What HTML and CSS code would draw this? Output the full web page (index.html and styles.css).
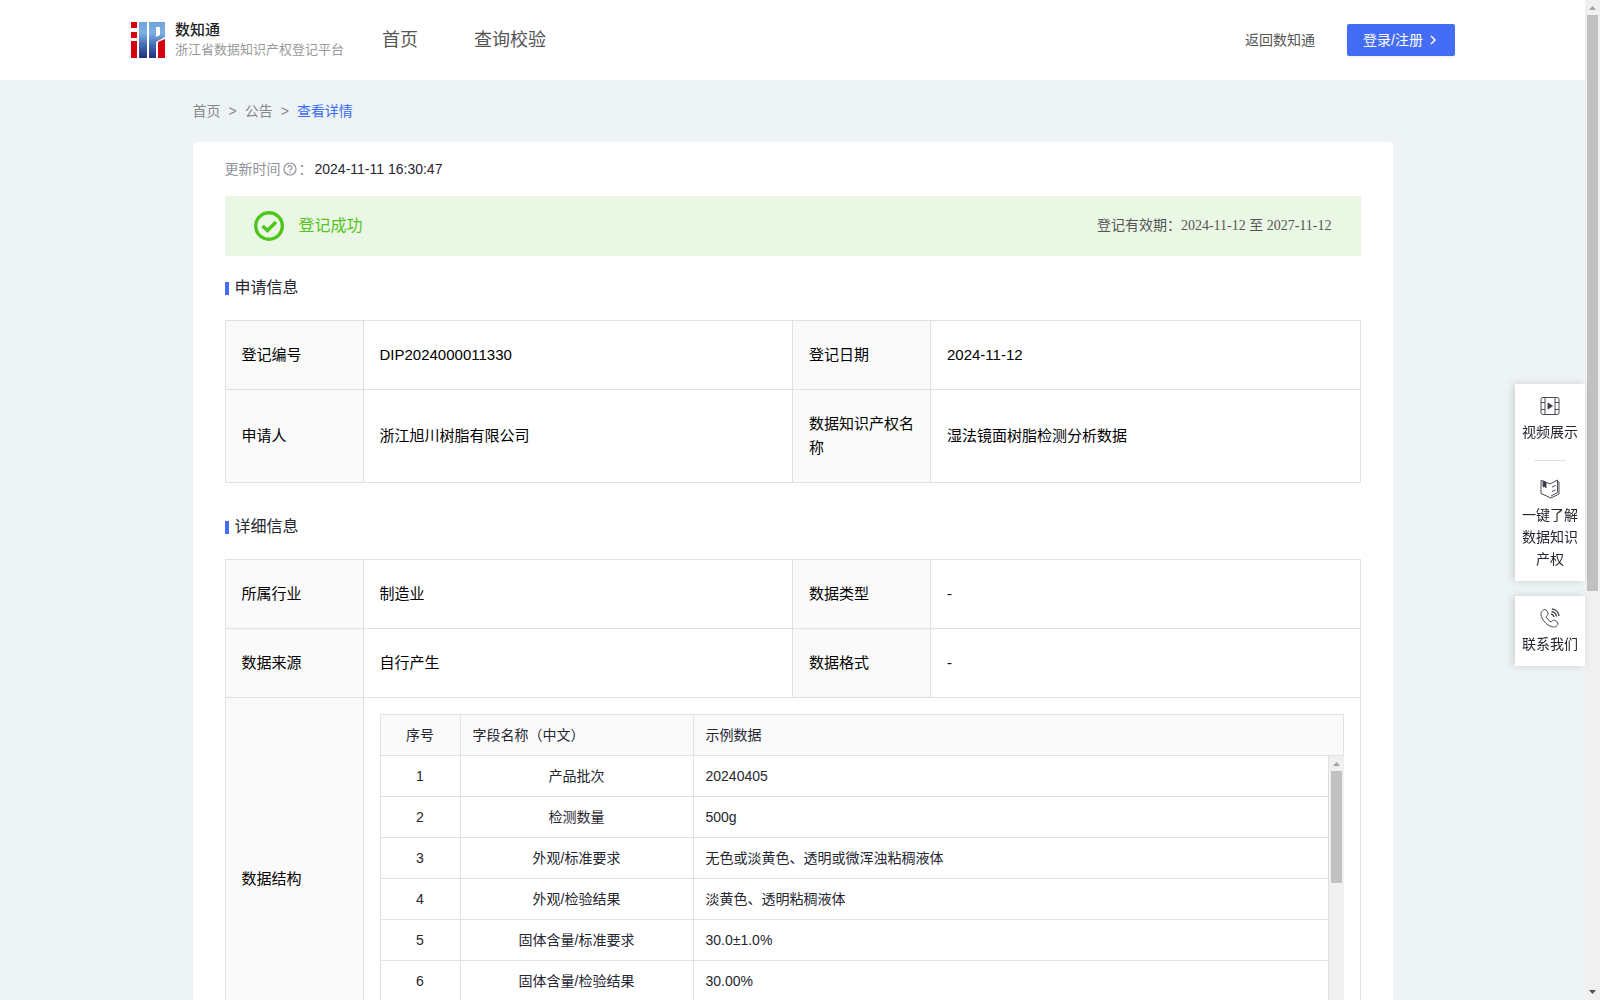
FILE: index.html
```html
<!DOCTYPE html>
<html lang="zh-CN">
<head>
  <meta charset="UTF-8" />
  <meta name="viewport" content="width=device-width, initial-scale=1" />
  <title>浙江省数据知识产权登记平台</title>
  <link rel="stylesheet" href="styles.css">
</head>
<body>

<div class="page">
  <header class="header">
    <a class="logo" href="#">
      <svg class="logo-mark" viewBox="0 0 34 36" width="34" height="36" aria-hidden="true">
        <defs>
          <linearGradient id="logoBlue" x1="0" y1="0" x2="0" y2="36" gradientUnits="userSpaceOnUse">
            <stop offset="0" stop-color="#6fa3dc" />
            <stop offset="0.3" stop-color="#7db0e4" />
            <stop offset="0.65" stop-color="#4468b0" />
            <stop offset="1" stop-color="#22307e" />
          </linearGradient>
        </defs>
        <path fill="#d7000f" d="M0 0h6v6H0zM0 10h6v6H0zM0 19h6v17H0zM27 20l7-3v19h-7z" />
        <path fill="url(#logoBlue)" d="M8 0h8v36H8zM18 0h16v15l-9 5v16h-7zM25 5v10l4-2V5z" fill-rule="evenodd" />
      </svg>
      <span class="logo-text">
        <strong>数知通</strong>
        <small>浙江省数据知识产权登记平台</small>
      </span>
    </a>
    <nav class="nav">
      <a href="#">首页</a>
      <a href="#">查询校验</a>
    </nav>
    <div class="header-right">
      <a class="back-link" href="#">返回数知通</a>
      <button class="login-btn" type="button">登录/注册
        <svg viewBox="0 0 8 10" width="8" height="10" aria-hidden="true"><path d="M2 1l4 4-4 4" fill="none" stroke="#fff" stroke-width="1.5" /></svg>
      </button>
    </div>
  </header>

  <main class="container">
    <nav class="breadcrumb">
      <a href="#">首页</a>
      <span>&gt;</span>
      <a href="#">公告</a>
      <span>&gt;</span>
      <a class="current" href="#">查看详情</a>
    </nav>

    <div class="card">
      <div class="update-time">
        <span class="update-label">更新时间</span>
        <svg viewBox="0 0 14 14" width="14" height="14" aria-hidden="true">
          <circle cx="7" cy="7" r="6" fill="none" stroke="#8f9299" stroke-width="1.2" />
          <path d="M5 5.6a2 2 0 1 1 2.8 1.8c-.6.3-.8.5-.8 1.2M7 9.6v1.2" fill="none" stroke="#8f9299" stroke-width="1.2" />
        </svg>
        <span class="update-label">：</span>
        <span>2024-11-11 16:30:47</span>
      </div>

      <div class="banner">
        <svg viewBox="0 0 30 30" width="30" height="30" aria-hidden="true">
          <circle cx="15" cy="15" r="13.3" fill="none" stroke="#4ec51b" stroke-width="3.4" />
          <path d="M8.500 15l5 4.500 8.500-8.500" fill="none" stroke="#4ec51b" stroke-width="3.6" />
        </svg>
        <span class="banner-status">登记成功</span>
        <span class="banner-date">登记有效期：2024-11-12 至 2027-11-12</span>
      </div>

      <h2 class="title">申请信息</h2>
      <table class="info">
        <tr>
          <th scope="row">登记编号</th>
          <td>DIP2024000011330</td>
          <th scope="row">登记日期</th>
          <td>2024-11-12</td>
        </tr>
        <tr>
          <th scope="row">申请人</th>
          <td>浙江旭川树脂有限公司</td>
          <th scope="row">数据知识产权名称</th>
          <td>湿法镜面树脂检测分析数据</td>
        </tr>
      </table>

      <h2 class="title">详细信息</h2>
      <table class="info">
        <tr>
          <th scope="row">所属行业</th>
          <td>制造业</td>
          <th scope="row">数据类型</th>
          <td>-</td>
        </tr>
        <tr>
          <th scope="row">数据来源</th>
          <td>自行产生</td>
          <th scope="row">数据格式</th>
          <td>-</td>
        </tr>
        <tr>
          <th scope="row">数据结构</th>
          <td class="nested" colspan="3">
            <table class="fields fields-head">
              <tr><th scope="col">序号</th><th scope="col">字段名称（中文）</th><th scope="col">示例数据</th></tr>
            </table>
            <div class="fields-scroll">
              <table class="fields fields-body">
                <tr><td>1</td><td>产品批次</td><td>20240405</td></tr>
                <tr><td>2</td><td>检测数量</td><td>500g</td></tr>
                <tr><td>3</td><td>外观/标准要求</td><td>无色或淡黄色、透明或微浑浊粘稠液体</td></tr>
                <tr><td>4</td><td>外观/检验结果</td><td>淡黄色、透明粘稠液体</td></tr>
                <tr><td>5</td><td>固体含量/标准要求</td><td>30.0±1.0%</td></tr>
                <tr><td>6</td><td>固体含量/检验结果</td><td>30.00%</td></tr>
              </table>
              <div class="scrollbar" aria-hidden="true">
                <svg viewBox="0 0 15 15" width="15" height="15"><path fill="#a3a3a3" d="M4 10l3.500-4 3.500 4z" /></svg>
                <div class="track"><div class="thumb" style="height: 43.4%"></div></div>
                <svg viewBox="0 0 15 15" width="15" height="15"><path fill="#505050" d="M4 5l3.500 4L11 5z" /></svg>
              </div>
            </div>
          </td>
        </tr>
      </table>
    </div>
  </main>
</div>

<div class="scrollbar" aria-hidden="true">
  <svg viewBox="0 0 15 15" width="15" height="15"><path fill="#a3a3a3" d="M4 10l3.500-4 3.500 4z" /></svg>
  <div class="track"><div class="thumb" style="height: 59.4%"></div></div>
  <svg viewBox="0 0 15 15" width="15" height="15"><path fill="#505050" d="M4 5l3.500 4L11 5z" /></svg>
</div>

<aside class="side">
  <div class="side-box">
    <a href="#">
      <svg viewBox="0 0 20 20" width="20" height="20" aria-hidden="true">
        <rect x="1" y="1.500" width="18" height="17" rx="2" />
        <path d="M5 1.500v17M15 1.500v17M1 6.500h4M1 13.500h4M15 6.500h4M15 13.500h4" />
        <path class="solid" d="M8 7l4.500 3L8 13z" />
      </svg>
      视频展示
    </a>
    <hr>
    <a href="#">
      <svg viewBox="0 0 20 20" width="20" height="20" aria-hidden="true">
        <path d="M3 2L1 1.500v13l10 4.500 8-4V3l-1.500-.5M3 2l7 3 7.500-4v12.500L11 17M12 8l3.500-1.500M12 12.500l3.500-1.500" />
        <path class="solid" d="M3 2l3 1.300V9L4.500 7.500 3 8z" />
      </svg>
      一键了解数据知识产权
    </a>
  </div>
  <div class="side-box">
    <a href="#">
      <svg viewBox="0 0 20 20" width="20" height="20" aria-hidden="true">
        <path d="M5 1.500C1 2 0 6 2 10c2 4 5 7 9 8.500 3 1 6.500.5 7-3.500 0-1-3.500-3-4.500-3-1 .3-1.500 2-2.500 1.800C9 13 6.500 10 6.300 8.600c0-1 1.700-1.400 1.900-2.400C8.200 5 6.500 1.500 5 1.500z" />
        <path stroke-width="1.4" d="M11 6c1.500.2 2.500 1.300 3 3M11.500 3.500c2.500.3 4.500 2 5 5M12 1c3.500.3 6.500 3 7 7" />
      </svg>
      联系我们
    </a>
  </div>
</aside>

</body>
</html>
```

FILE: styles.css
```css
* {
  box-sizing: border-box;
}

body {
  display: flex;
  height: 100vh;
  margin: 0;
  overflow: hidden;
  background: #eef3f6;
  color: #252631;
  font-family: "Liberation Sans", "Noto Sans CJK SC", sans-serif;
  font-size: 14px;
  line-height: 22px;
}

a {
  color: inherit;
  text-decoration: none;
}

svg {
  flex: none;
}

.page {
  flex: 1;
  min-width: 0;
  overflow: hidden;
}

/* header */
.header {
  display: flex;
  align-items: center;
  height: 80px;
  padding: 0 130px 0 131px;
  background: #fff;
  color: #555;
}

.logo {
  display: flex;
  align-items: center;
  gap: 10px;
}

.logo-text strong,
.logo-text small {
  display: block;
  line-height: 20px;
}

.logo-text strong {
  color: #222;
  font-size: 15px;
  font-weight: 500;
}

.logo-text small {
  color: #999;
  font-size: 13px;
}

.nav {
  display: flex;
  gap: 56px;
  margin-left: 38px;
  font-size: 18px;
}

.header-right {
  display: flex;
  align-items: center;
  gap: 32px;
  margin-left: auto;
}

.login-btn {
  display: flex;
  align-items: center;
  gap: 6px;
  height: 32px;
  padding: 0 18px 0 16px;
  border: none;
  border-radius: 2px;
  background: #446df6;
  box-shadow: 0 2px 2px rgba(0, 0, 0, 0.05);
  color: #fff;
  font: inherit;
  cursor: pointer;
}

/* content */
.container {
  width: 1200px;
  max-width: 100%;
  margin: 0 auto;
}

.breadcrumb {
  display: flex;
  gap: 8px;
  padding: 20px 0;
  color: #86888c;
}

.breadcrumb .current {
  color: #3a6bf5;
}

.card {
  padding: 16px 32px 32px;
  border-radius: 4px;
  background: #fff;
}

.update-time {
  display: flex;
  align-items: center;
  gap: 2px;
}

.update-label {
  color: #8f9299;
}

.banner {
  display: flex;
  align-items: center;
  gap: 15px;
  height: 60px;
  margin-top: 16px;
  padding: 0 29px;
  background: #ebf7e5;
}

.banner-status {
  color: #52c41a;
  font-size: 16px;
}

.banner-date {
  margin-left: auto;
  color: #555;
  font-family: "Liberation Serif", "Noto Sans CJK SC", serif;
}

.title {
  display: flex;
  align-items: center;
  gap: 6px;
  margin: 20px 0;
  font-size: 16px;
  font-weight: 400;
  line-height: 24px;
}

.title::before {
  content: "";
  width: 4px;
  height: 13px;
  background: #446df6;
}

table {
  width: 100%;
  border-collapse: collapse;
  table-layout: fixed;
}

th {
  background: #fafafa;
  font-weight: 400;
  text-align: left;
}

th,
td {
  border: 1px solid #e1e1e1;
}

.info {
  margin-bottom: 32px;
  color: #000;
  font-size: 15px;
  line-height: 24px;
}

.info > tbody > tr > th,
.info > tbody > tr > td {
  height: 69px;
  padding: 22px 16px;
}

.info > tbody > tr > th {
  width: 138px;
}

.info > tbody > tr > .nested {
  padding: 16px;
}

/* field list with a fixed head */
.fields {
  color: #252631;
  font-size: 14px;
}

.fields th,
.fields td {
  height: 41px;
  padding: 0 12px;
}

.fields th:first-child,
.fields td:first-child {
  width: 80px;
}

.fields th:nth-child(2),
.fields td:nth-child(2) {
  width: 233px;
}

.fields th:first-child,
.fields td:first-child,
.fields td:nth-child(2) {
  text-align: center;
}

.fields-scroll {
  display: flex;
  height: 288px;
  overflow: hidden;
}

.fields-body {
  align-self: flex-start;
  flex: 1;
}

.fields-body tr:first-child td {
  height: 40px;
  border-top: none;
}

/* scrollbars */
.scrollbar {
  display: flex;
  flex: none;
  flex-direction: column;
  width: 15px;
  background: #f0f0f0;
}

.track {
  flex: 1;
  padding: 0 2px;
}

.thumb {
  background: #c1c1c1;
}

/* floating links */
.side {
  position: fixed;
  top: 384px;
  right: 15px;
  width: 70px;
}

.side-box {
  margin-bottom: 15px;
  background: #fff;
  box-shadow: -2px 0 8px rgba(0, 0, 0, 0.15);
}

.side-box a {
  display: flex;
  flex-direction: column;
  align-items: center;
  gap: 5px;
  padding: 12px 7px 11px;
  text-align: center;
}

.side-box hr {
  width: 32px;
  margin: 6px auto;
  border: none;
  border-top: 1px solid #dcdfe3;
}

.side-box svg {
  fill: none;
  stroke: #4a4b55;
}

.side-box .solid {
  fill: #33343f;
}
```
